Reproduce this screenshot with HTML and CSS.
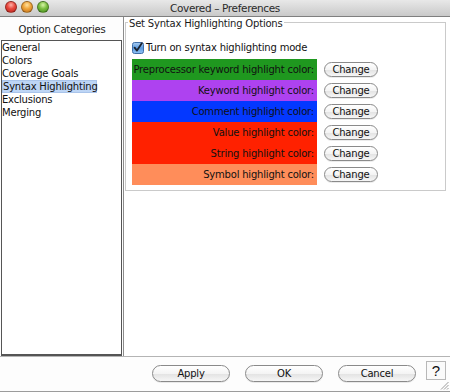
FILE: index.html
```html
<!DOCTYPE html>
<html>
<head>
<meta charset="utf-8">
<link rel="stylesheet" href="styles.css">
</head>
<body>
<div class="window">
  <div class="titlebar">
    <div class="lights">
      <span class="light red"></span>
      <span class="light yellow"></span>
      <span class="light green"></span>
    </div>
    <div class="title">Covered – Preferences</div>
  </div>
  <div class="main">
    <div class="sidebar">
      <div class="side-head">Option Categories</div>
      <div class="listbox">
        <div class="item">General</div>
        <div class="item">Colors</div>
        <div class="item">Coverage Goals</div>
        <div class="item selected">Syntax Highlighting</div>
        <div class="item">Exclusions</div>
        <div class="item">Merging</div>
      </div>
    </div>
    <div class="content">
      <div class="group">
        <div class="group-title">Set Syntax Highlighting Options</div>
        <label class="check-row">
          <svg class="checkbox" width="12" height="12" viewBox="0 0 12 12">
            <defs>
              <linearGradient id="cb" x1="0" y1="0" x2="0" y2="1">
                <stop offset="0" stop-color="#a9cdf2"/>
                <stop offset="0.5" stop-color="#5d9be0"/>
                <stop offset="1" stop-color="#8fc2f4"/>
              </linearGradient>
            </defs>
            <rect x="0.5" y="0.5" width="11" height="11" rx="2" fill="url(#cb)" stroke="#3f6ea8"/>
            <path d="M2.6 5.6 L5 8.6 L9.8 1.2" fill="none" stroke="#1a2230" stroke-width="1.8" stroke-linecap="round" stroke-linejoin="round"/>
          </svg>
          <span>Turn on syntax highlighting mode</span>
        </label>
        <div class="rows">
          <div class="row"><div class="swatch c-green">Preprocessor keyword highlight color:</div><button class="btn small">Change</button></div>
          <div class="row"><div class="swatch c-purple">Keyword highlight color:</div><button class="btn small">Change</button></div>
          <div class="row"><div class="swatch c-blue">Comment highlight color:</div><button class="btn small">Change</button></div>
          <div class="row"><div class="swatch c-red">Value highlight color:</div><button class="btn small">Change</button></div>
          <div class="row"><div class="swatch c-red">String highlight color:</div><button class="btn small">Change</button></div>
          <div class="row"><div class="swatch c-orange">Symbol highlight color:</div><button class="btn small">Change</button></div>
        </div>
      </div>
    </div>
  </div>
  <div class="footer">
    <button class="btn wide">Apply</button>
    <button class="btn wide">OK</button>
    <button class="btn wide">Cancel</button>
    <button class="help">?</button>
    <svg class="grip" width="9" height="9" viewBox="0 0 9 9">
      <path d="M8.5 1 L1 8.5 M8.5 4 L4 8.5 M8.5 7 L7 8.5" stroke="#9a9a9a" stroke-width="1"/>
    </svg>
  </div>
</div>
</body>
</html>
```
FILE: styles.css
```css
* { box-sizing: border-box; }
html, body { margin: 0; padding: 0; }
body {
  width: 450px;
  height: 392px;
  font-family: "DejaVu Sans", "Liberation Sans", sans-serif;
  font-size: 10px;
  letter-spacing: -0.2px;
  color: #111;
  background: #ffffff;
  overflow: hidden;
}
.window {
  width: 450px;
  height: 392px;
  display: flex;
  flex-direction: column;
  background: #fdfdfd;
  border-bottom: 1px solid #9c9c9c;
}
.titlebar {
  height: 17px;
  flex: none;
  position: relative;
  background: linear-gradient(#e8e8e8, #c9c9c9);
  border-bottom: 1px solid #7f7f7f;
  display: flex;
  align-items: center;
  justify-content: center;
}
.lights {
  position: absolute;
  left: 5px;
  top: 1px;
  display: flex;
  gap: 4px;
}
.light {
  width: 12px;
  height: 12px;
  border-radius: 50%;
  display: block;
  border: 1px solid rgba(0,0,0,0.3);
}
.light.red { background: radial-gradient(circle at 50% 30%, #ffb0a8 0, #e8483e 45%, #b8221a 100%); }
.light.yellow { background: radial-gradient(circle at 50% 30%, #ffe2a0 0, #f0a43a 45%, #c0701a 100%); }
.light.green { background: radial-gradient(circle at 50% 30%, #d8f5a8 0, #7cbf42 45%, #3f8a1a 100%); }
.title {
  font-size: 10.5px;
  letter-spacing: -0.35px;
  color: #2a2a2a;
  line-height: 16px;
}
.main {
  flex: 1;
  display: flex;
  min-height: 0;
  border-bottom: 1px solid #b4b4b4;
}
.sidebar {
  width: 123px;
  flex: none;
  display: flex;
  flex-direction: column;
  padding-left: 1px;
  background: #fdfdfd;
}
.side-head {
  height: 23px;
  flex: none;
  display: flex;
  align-items: center;
  justify-content: center;
  color: #222;
  padding-top: 1px;
}
.listbox {
  flex: 1;
  width: 121px;
  background: #ffffff;
  border: 1px solid #555;
  border-bottom-width: 2px;
  padding: 0;
}
.item {
  height: 13px;
  line-height: 13px;
  padding-left: 0;
  width: 95px;
  white-space: nowrap;
}
.item.selected {
  background: #bdd5f5;
  border: 1px solid #a9c4ea;
  line-height: 11px;
}
.content {
  flex: 1;
  background: #ffffff;
  border-left: 1px solid #8c8c8c;
  padding: 5px 4px 0 1px;
}
.group {
  position: relative;
  border: 1px solid #cacaca;
  height: 169px;
  padding: 18px 0 0 6px;
}
.group-title {
  position: absolute;
  left: 2px;
  top: -6px;
  background: #ffffff;
  padding: 0 1px;
  line-height: 13px;
  color: #1a1a1a;
}
.check-row {
  display: flex;
  align-items: center;
  gap: 2px;
  height: 13px;
}
.checkbox { display: block; flex: none; }
.rows {
  margin-top: 5px;
  display: flex;
  flex-direction: column;
}
.row {
  display: flex;
  align-items: center;
  height: 21px;
}
.swatch {
  width: 185px;
  height: 21px;
  line-height: 21px;
  text-align: right;
  padding-right: 3px;
  white-space: nowrap;
  color: #111;
}
.c-green { background: #1f981f; }
.c-purple { background: #ae42f0; }
.c-blue { background: #0438ff; }
.c-red { background: #ff2100; }
.c-orange { background: #ff8d5a; }
.btn {
  font-family: inherit;
  font-size: 10px;
  letter-spacing: -0.2px;
  color: #111;
  border: 1px solid #8a8a8a;
  border-radius: 9px;
  background: linear-gradient(#ffffff 0%, #f4f4f4 50%, #e2e2e2 51%, #f6f6f6 100%);
  padding: 0;
  margin: 0;
  box-shadow: 0 1px 0 rgba(0,0,0,0.08);
}
.btn.small {
  width: 54px;
  height: 15px;
  line-height: 13px;
  margin-left: 7px;
}
.footer {
  height: 34px;
  flex: none;
  display: flex;
  justify-content: flex-end;
  align-items: flex-start;
  padding: 8px 4px 0 0;
  gap: 15px;
  position: relative;
  background: #fdfdfd;
}
.btn.wide {
  width: 78px;
  height: 17px;
  line-height: 15px;
}
.help {
  margin-left: -5px;
  margin-top: -4px;
  width: 20px;
  height: 19px;
  padding: 0;
  border: 1px solid #b8b8b8;
  background: #fafafa;
  font-family: "Liberation Sans", sans-serif;
  font-size: 15px;
  line-height: 17px;
  color: #111;
}
.grip {
  position: absolute;
  right: 1px;
  bottom: 1px;
}
```
